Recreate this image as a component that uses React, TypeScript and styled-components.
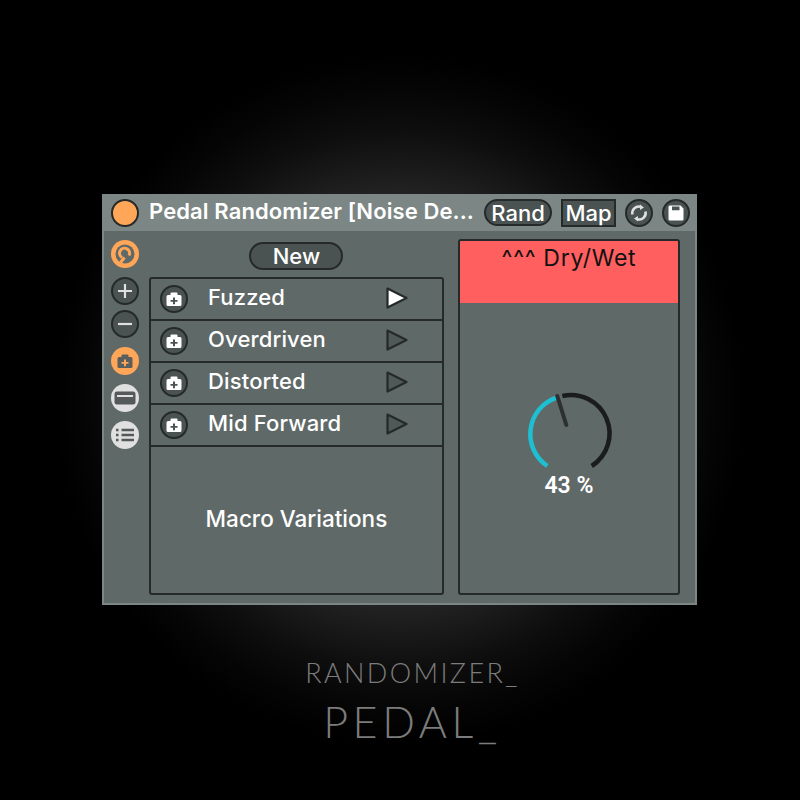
import React from "react";
import styled, { createGlobalStyle } from "styled-components";

const Ink = "#25292a";
const Body = "#5f6967";
const Bar = "#7c8684";
const Orange = "#ffa658";
const Pale = "#dfe0df";
const White = "#ffffff";

const GlobalStyle = createGlobalStyle`
  html, body {
    margin: 0;
    background: #000;
  }
`;

const Page = styled.div`
  width: 800px;
  height: 800px;
  box-sizing: border-box;
  padding-top: 194px;
  display: flex;
  flex-direction: column;
  align-items: center;
  overflow: hidden;
  background: radial-gradient(circle 345px at 400px 400px, #2e2e2e 0, #222 60%, #0e0e0e 78%, #050505 90%, #000 100%);
  font-family: Inter, "Liberation Sans", sans-serif;
`;

const Device = styled.div`
  width: 595px;
  height: 411px;
  box-sizing: border-box;
  margin-left: -1px;
  background: ${Body};
  border: solid 2px ${Bar};
  border-top: none;
  display: flex;
  flex-direction: column;
`;

const TitleBar = styled.div`
  height: 37px;
  flex-shrink: 0;
  margin: 0 -2px;
  padding: 0 7px 0 9px;
  background: ${Bar};
  display: flex;
  align-items: center;
`;

const TitleDot = styled.div`
  width: 28px;
  height: 28px;
  box-sizing: border-box;
  border-radius: 50%;
  background: ${Orange};
  border: solid 2px ${Ink};
`;

const Title = styled.div`
  margin-left: 10px;
  width: 335px;
  flex-shrink: 0;
  padding-bottom: 3px;
  color: ${White};
  font-size: 22px;
  font-weight: 600;
  letter-spacing: 0.1px;
  white-space: nowrap;
`;

const PillButton = styled.div<{ $width: number; $height: number; $square?: boolean; $left?: number }>`
  width: ${(p) => p.$width}px;
  height: ${(p) => p.$height}px;
  margin-left: ${(p) => p.$left ?? 0}px;
  box-sizing: border-box;
  flex-shrink: 0;
  display: flex;
  align-items: center;
  justify-content: center;
  background: #4a5351;
  border: solid 2.5px ${Ink};
  border-radius: ${(p) => (p.$square ? "0" : "15px")};
  color: ${White};
  font-size: 22px;
  font-weight: 500;
`;

const CircleButton = styled.div<{ $bg?: string; $color?: string; $top?: number; $left?: number; $noBorder?: boolean }>`
  width: 28px;
  height: 28px;
  box-sizing: border-box;
  flex-shrink: 0;
  margin-top: ${(p) => p.$top ?? 0}px;
  margin-left: ${(p) => p.$left ?? 0}px;
  display: flex;
  align-items: center;
  justify-content: center;
  border-radius: 50%;
  background: ${(p) => p.$bg ?? "#4a5351"};
  color: ${(p) => p.$color ?? White};
  border: ${(p) => (p.$noBorder ? "none" : `solid 2.5px ${Ink}`)};
`;

const TitleActions = styled.div`
  display: flex;
  align-items: center;
`;

const Content = styled.div`
  flex: 1;
  display: flex;
  padding: 8px 15px 8px 7px;
`;

const SideColumn = styled.div`
  width: 28px;
  margin-right: 10px;
  padding-top: 1px;
  display: flex;
  flex-direction: column;
`;

const Center = styled.div`
  width: 296px;
  padding-top: 3px;
  display: flex;
  flex-direction: column;
  align-items: center;
`;

const PresetList = styled.div`
  width: 100%;
  flex: 1;
  margin-top: 7px;
  box-sizing: border-box;
  border: solid 2px ${Ink};
  border-radius: 3px;
  display: flex;
  flex-direction: column;
`;

const Row = styled.div`
  height: 42px;
  box-sizing: border-box;
  flex-shrink: 0;
  padding-left: 9px;
  border-bottom: solid 2px ${Ink};
  display: flex;
  align-items: center;
`;

const RowLabel = styled.div`
  margin-left: 20px;
  width: 178px;
  padding-bottom: 5px;
  color: ${White};
  font-size: 22px;
  font-weight: 500;
  letter-spacing: 0.15px;
`;

const MacroLabel = styled.div`
  flex: 1;
  display: flex;
  align-items: center;
  justify-content: center;
  padding-bottom: 3px;
  color: ${White};
  font-size: 22.5px;
  font-weight: 500;
`;

const DialPanel = styled.div`
  width: 223px;
  margin-left: 14px;
  box-sizing: border-box;
  border: solid 2px ${Ink};
  border-radius: 3px;
  display: flex;
  flex-direction: column;
  align-items: center;
  overflow: hidden;
`;

const DialHeader = styled.div`
  width: 100%;
  height: 62px;
  flex-shrink: 0;
  padding-top: 3px;
  box-sizing: border-box;
  background: #ff5f5f;
  color: #111;
  text-align: center;
  font-size: 23px;
  font-weight: 400;
  letter-spacing: 0.7px;
`;

const Dial = styled.svg`
  display: block;
  margin-top: 81px;
`;

const DialValue = styled.div`
  margin-top: -12px;
  color: ${White};
  font-size: 23px;
  font-weight: 600;
  font-family: Roboto, Inter, sans-serif;
`;

const Caption = styled.div`
  margin-top: 54px;
  margin-left: 25px;
  display: flex;
  flex-direction: column;
  align-items: center;
  font-family: Lato, sans-serif;
  font-weight: 300;
  color: #7c7c7c;
  line-height: 1;
`;

const CaptionTop = styled.div`
  font-size: 27px;
  letter-spacing: 2.4px;
`;

const CaptionBottom = styled.div`
  margin-top: 14px;
  font-size: 43px;
  letter-spacing: 4.6px;
`;

const PlayWrap = styled.svg`
  display: block;
  margin-bottom: 3px;
`;

const CameraIcon = () => (
  <svg width="18" height="18" viewBox="0 0 18 18">
    <path
      fillRule="evenodd"
      fill="currentColor"
      d="M6.500 2.500h5a1 1 0 0 1 1 1V5H15a1.500 1.500 0 0 1 1.500 1.500v8A1.500 1.500 0 0 1 15 16H3a1.500 1.500 0 0 1-1.500-1.500v-8A1.500 1.500 0 0 1 3 5h2.500V3.500a1 1 0 0 1 1-1zM8 7.500V10H5.500v1.800H8v2.400h2v-2.400h2.500V10H10V7.500z"
    />
  </svg>
);

const PlayIcon = ({ active }: { active: boolean }) => (
  <PlayWrap width="22" height="22" viewBox="0 0 22 22">
    <path
      d="M1.500 1.500 L20.500 11 L1.500 20.500 Z"
      fill={active ? White : "#4f5957"}
      stroke={Ink}
      strokeWidth="2.200"
      strokeLinejoin="round"
    />
  </PlayWrap>
);

const presets = ["Fuzzed", "Overdriven", "Distorted", "Mid Forward"];

const App = () => {
  return (
    <Page>
      <GlobalStyle />
      <Device>
        <TitleBar>
          <TitleDot />
          <Title>Pedal Randomizer [Noise De...</Title>
          <TitleActions>
            <PillButton $width={68} $height={27}>Rand</PillButton>
            <PillButton $width={55} $height={28} $square $left={9}>Map</PillButton>
            <CircleButton $left={9}>
              <svg width="20" height="20" viewBox="0 0 20 20" fill="none" stroke={Pale} strokeWidth="2.600">
                <path d="M3.500 11.500A6.500 6.500 0 0 1 11.500 3.700" />
                <path d="M16.500 8.500A6.500 6.500 0 0 1 8.500 16.300" />
                <path d="M11 1.500L15 4.500L11 7ZM9 18.500L5 15.500L9 13Z" fill={Pale} stroke="none" />
              </svg>
            </CircleButton>
            <CircleButton $left={9}>
              <svg width="18" height="18" viewBox="0 0 18 18">
                <path
                  fillRule="evenodd"
                  fill={White}
                  d="M3 1.500h10.500l3 3V15a1.500 1.500 0 0 1-1.500 1.500H3A1.500 1.500 0 0 1 1.500 15V3A1.500 1.500 0 0 1 3 1.500zM5 2.500v3.800h7.500V2.500z"
                />
              </svg>
            </CircleButton>
          </TitleActions>
        </TitleBar>
        <Content>
          <SideColumn>
            <CircleButton $bg={Orange} $color="#5f6967" $noBorder>
              <svg width="28" height="28" viewBox="0 0 28 28" fill="none">
                <circle cx="14" cy="14" r="9.500" fill="currentColor" />
                <path
                  d="M9.500 22.500L13.500 17.500M18 15.500A5 5 0 1 0 11 17.500"
                  stroke={Orange}
                  strokeWidth="3"
                />
              </svg>
            </CircleButton>
            <CircleButton $top={9}>
              <svg width="16" height="16" viewBox="0 0 16 16" stroke={Pale} strokeWidth="2.200">
                <path d="M1 8h14M8 1v14" />
              </svg>
            </CircleButton>
            <CircleButton $top={5}>
              <svg width="16" height="16" viewBox="0 0 16 16" stroke={Pale} strokeWidth="2.200">
                <path d="M1 8h14" />
              </svg>
            </CircleButton>
            <CircleButton $top={9} $bg={Orange} $color="#5a5f5e" $noBorder>
              <CameraIcon />
            </CircleButton>
            <CircleButton $top={9} $bg={Pale} $color="#55595a" $noBorder>
              <svg width="22" height="14" viewBox="0 0 22 14">
                <rect x="0.500" y="0.500" width="21" height="13" rx="2.500" fill="currentColor" />
                <path d="M3 5h16" stroke={Pale} strokeWidth="2" />
              </svg>
            </CircleButton>
            <CircleButton $top={9} $bg={Pale} $color="#55595a" $noBorder>
              <svg width="18" height="14" viewBox="0 0 18 14" stroke="currentColor" strokeWidth="2.400">
                <path d="M0 2h2.500M5.500 2H18M0 7h2.500M5.500 7H18M0 12h2.500M5.500 12H18" />
              </svg>
            </CircleButton>
          </SideColumn>
          <Center>
            <PillButton $width={94} $height={28}>New</PillButton>
            <PresetList>
              {presets.map((name, i) => (
                <Row key={name}>
                  <CircleButton>
                    <CameraIcon />
                  </CircleButton>
                  <RowLabel>{name}</RowLabel>
                  <PlayIcon active={i === 0} />
                </Row>
              ))}
              <MacroLabel>Macro Variations</MacroLabel>
            </PresetList>
          </Center>
          <DialPanel>
            <DialHeader>^^^ Dry/Wet</DialHeader>
            <Dial width="100" height="100" viewBox="0 0 100 100" fill="none" strokeWidth="4.500" strokeLinecap="butt">
              <path d="M28.300 82A38.500 38.500 0 0 1 36.900 13.800" stroke="#1fbfd3" />
              <path d="M43.400 12A38.500 38.500 0 0 1 72.700 82" stroke="#1a1c1d" />
              <path d="M38.300 12L47.300 41" stroke="#2c3031" strokeLinecap="round" strokeWidth="4" />
            </Dial>
            <DialValue>43 %</DialValue>
          </DialPanel>
        </Content>
      </Device>
      <Caption>
        <CaptionTop>RANDOMIZER_</CaptionTop>
        <CaptionBottom>PEDAL_</CaptionBottom>
      </Caption>
    </Page>
  );
};

export default App;
